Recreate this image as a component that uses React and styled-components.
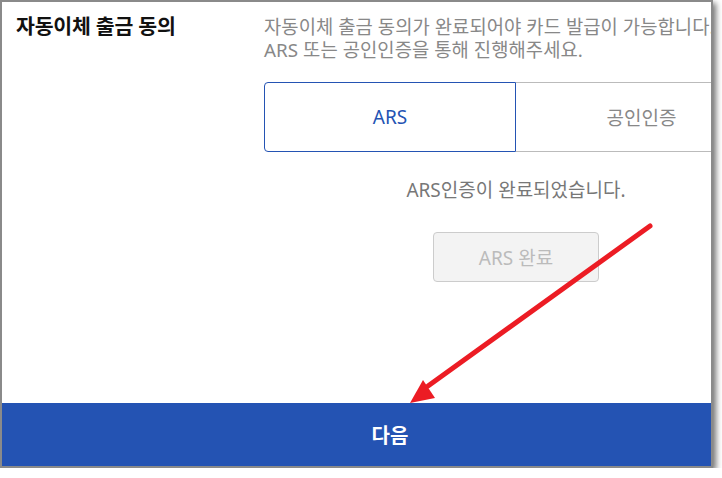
import React, { useState } from "react";
import styled, { createGlobalStyle } from "styled-components";

const GlobalStyle = createGlobalStyle`
  html, body {
    margin: 0;
    padding: 0;
    background: #fff;
    overflow: hidden;
  }
  body {
    font-family: "Noto Sans", "Noto Sans CJK KR", sans-serif;
  }
`;

const Frame = styled.div`
  position: relative;
  width: 709px;
  height: 464px;
  border: 2px solid #8a8a8a;
  box-shadow: 3px 3px 6px rgba(0, 0, 0, 0.55);
  overflow: hidden;
  background: #fff;
`;

const Page = styled.div`
  width: 776px;
  height: 100%;
  display: flex;
  flex-direction: column;
`;

const Content = styled.div`
  flex: 1;
  display: grid;
  grid-template-columns: 248px 504px;
  padding: 10px 0 0 14px;
`;

const Title = styled.h2`
  margin: 0;
  font-size: 20.5px;
  line-height: 28px;
  font-weight: 700;
  color: #111;
  letter-spacing: -0.2px;
`;

const Description = styled.p`
  margin: 4px 0 0;
  font-size: 18.8px;
  line-height: 23px;
  color: #888;
  white-space: nowrap;
  letter-spacing: 0.05px;
`;

const Tabs = styled.div`
  display: grid;
  grid-template-columns: 1fr 1fr;
  margin-top: 20px;
  height: 70px;
`;

const Tab = styled.button`
  font-family: inherit;
  font-size: 19px;
  background: #fff;
  cursor: pointer;
  border: 1px solid ${(p) => (p.$active ? "#2453b3" : "#bbb")};
  border-left-width: ${(p) => (p.$active ? "1px" : "0")};
  border-radius: ${(p) => (p.$active ? "4px 0 0 4px" : "0 4px 4px 0")};
  color: ${(p) => (p.$active ? "#2453b3" : "#888")};
`;

const Status = styled.div`
  display: flex;
  flex-direction: column;
  align-items: center;
  padding-top: 24px;
`;

const StatusText = styled.p`
  margin: 0;
  font-size: 19px;
  line-height: 28px;
  color: #777;
`;

const DoneButton = styled.button`
  margin-top: 28px;
  width: 166px;
  height: 50px;
  font-family: inherit;
  font-size: 19px;
  color: #bbb;
  background: #f3f3f3;
  border: 1px solid #ccc;
  border-radius: 4px;
`;

const NextBar = styled.button`
  height: 63px;
  width: 100%;
  border: none;
  background: #2453b3;
  color: #fff;
  font-family: inherit;
  font-size: 20px;
  font-weight: 700;
`;

const Overlay = styled.svg`
  position: absolute;
  left: -2px;
  top: -2px;
  pointer-events: none;
`;

const Arrow = () => (
  <Overlay width="722" height="478" viewBox="0 0 722 478">
    <line
      x1="650"
      y1="226"
      x2="428"
      y2="386"
      stroke="#ec1c24"
      strokeWidth="5"
      strokeLinecap="round"
    />
    <polygon points="410,403 423,380 435,398" fill="#ec1c24" />
  </Overlay>
);

export default function App() {
  const [method, setMethod] = useState("ars");
  return (
    <>
      <GlobalStyle />
      <Frame>
        <Page>
          <Content>
            <Title>자동이체 출금 동의</Title>
            <div>
              <Description>
                자동이체 출금 동의가 완료되어야 카드 발급이 가능합니다.
                <br />
                ARS 또는 공인인증을 통해 진행해주세요.
              </Description>
              <Tabs>
                <Tab $active={method === "ars"} onClick={() => setMethod("ars")}>
                  ARS
                </Tab>
                <Tab $active={method === "cert"} onClick={() => setMethod("cert")}>
                  공인인증
                </Tab>
              </Tabs>
              <Status>
                <StatusText>ARS인증이 완료되었습니다.</StatusText>
                <DoneButton disabled>ARS 완료</DoneButton>
              </Status>
            </div>
          </Content>
          <NextBar>다음</NextBar>
        </Page>
        <Arrow />
      </Frame>
    </>
  );
}
